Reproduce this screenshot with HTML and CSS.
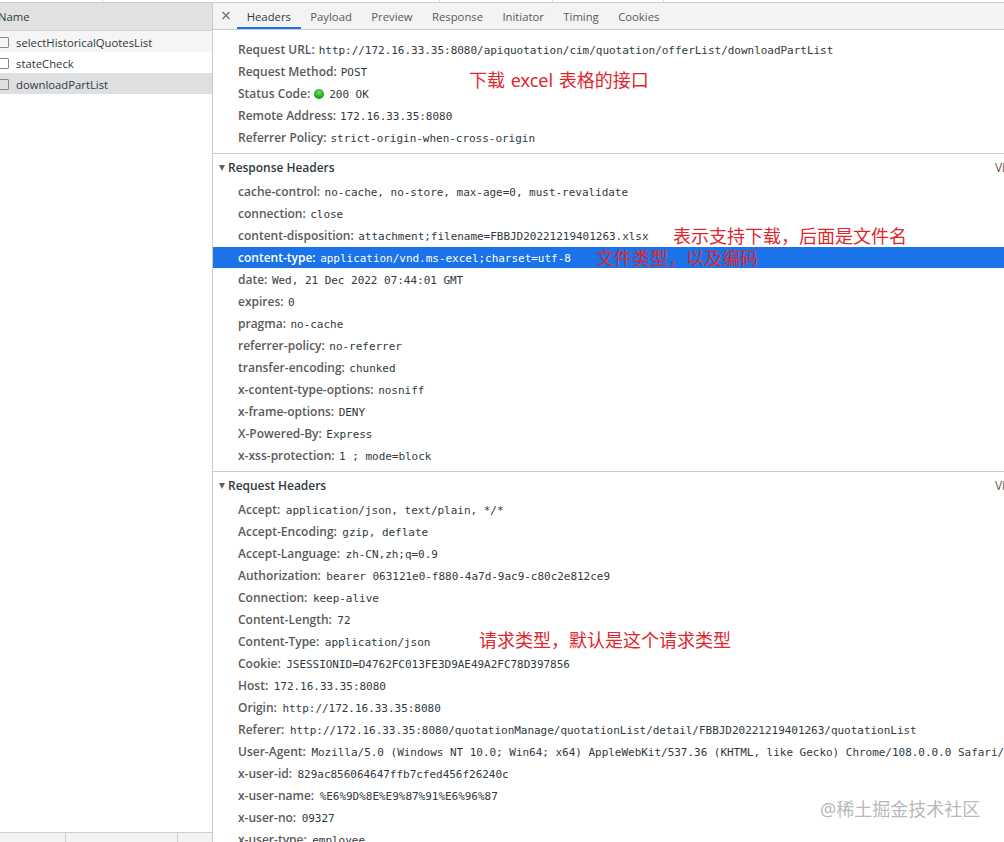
FILE: index.html
```html
<!DOCTYPE html>
<html lang="zh-CN">
<head>
<meta charset="utf-8">
<title>Network</title>
<link rel="stylesheet" href="styles.css">
</head>
<body>
<div class="topstrip"><i class="s1"></i><i class="s2"></i><i class="s3"></i><i class="s4"></i></div>
<div class="panes">
  <aside class="list">
    <div class="list-head">Name</div>
    <div class="req alt"><span class="cb"></span>selectHistoricalQuotesList</div>
    <div class="req"><span class="cb"></span>stateCheck</div>
    <div class="req sel"><span class="cb"></span>downloadPartList</div>
    <div class="list-fill"></div>
    <div class="list-foot"><i class="f1"></i><i class="f2"></i></div>
  </aside>
  <main class="detail">
    <nav class="tabs">
      <svg class="close" width="10" height="10" viewBox="0 0 10 10"><path d="M1.5 1l7 7M8.5 1l-7 7" stroke="#6e6e6e" stroke-width="1.2" fill="none"/></svg>
      <span class="tab active">Headers</span>
      <span class="tab">Payload</span>
      <span class="tab">Preview</span>
      <span class="tab">Response</span>
      <span class="tab">Initiator</span>
      <span class="tab">Timing</span>
      <span class="tab">Cookies</span>
    </nav>
    <section class="general">
      <div class="row"><b>Request URL:</b><code>http://172.16.33.35:8080/apiquotation/cim/quotation/offerList/downloadPartList</code></div>
      <div class="row"><b>Request Method:</b><code>POST</code></div>
      <div class="row"><b>Status Code:</b><span class="dot"></span><code>200 OK</code></div>
      <div class="row"><b>Remote Address:</b><code>172.16.33.35:8080</code></div>
      <div class="row"><b>Referrer Policy:</b><code>strict-origin-when-cross-origin</code></div>
    </section>
    <section class="block response">
      <h3 class="head"><span class="tri"></span>Response Headers<span class="view">View source</span></h3>
      <div class="row"><b>cache-control:</b><code>no-cache, no-store, max-age=0, must-revalidate</code></div>
      <div class="row"><b>connection:</b><code>close</code></div>
      <div class="row"><b>content-disposition:</b><code>attachment;filename=FBBJD20221219401263.xlsx</code></div>
      <div class="row picked"><b>content-type:</b><code>application/vnd.ms-excel;charset=utf-8</code></div>
      <div class="row"><b>date:</b><code>Wed, 21 Dec 2022 07:44:01 GMT</code></div>
      <div class="row"><b>expires:</b><code>0</code></div>
      <div class="row"><b>pragma:</b><code>no-cache</code></div>
      <div class="row"><b>referrer-policy:</b><code>no-referrer</code></div>
      <div class="row"><b>transfer-encoding:</b><code>chunked</code></div>
      <div class="row"><b>x-content-type-options:</b><code>nosniff</code></div>
      <div class="row"><b>x-frame-options:</b><code>DENY</code></div>
      <div class="row"><b>X-Powered-By:</b><code>Express</code></div>
      <div class="row"><b>x-xss-protection:</b><code>1 ; mode=block</code></div>
    </section>
    <section class="block request">
      <h3 class="head"><span class="tri"></span>Request Headers<span class="view">View source</span></h3>
      <div class="row"><b>Accept:</b><code>application/json, text/plain, */*</code></div>
      <div class="row"><b>Accept-Encoding:</b><code>gzip, deflate</code></div>
      <div class="row"><b>Accept-Language:</b><code>zh-CN,zh;q=0.9</code></div>
      <div class="row"><b>Authorization:</b><code>bearer 063121e0-f880-4a7d-9ac9-c80c2e812ce9</code></div>
      <div class="row"><b>Connection:</b><code>keep-alive</code></div>
      <div class="row"><b>Content-Length:</b><code>72</code></div>
      <div class="row"><b>Content-Type:</b><code>application/json</code></div>
      <div class="row"><b>Cookie:</b><code>JSESSIONID=D4762FC013FE3D9AE49A2FC78D397856</code></div>
      <div class="row"><b>Host:</b><code>172.16.33.35:8080</code></div>
      <div class="row"><b>Origin:</b><code>http://172.16.33.35:8080</code></div>
      <div class="row"><b>Referer:</b><code>http://172.16.33.35:8080/quotationManage/quotationList/detail/FBBJD20221219401263/quotationList</code></div>
      <div class="row"><b>User-Agent:</b><code>Mozilla/5.0 (Windows NT 10.0; Win64; x64) AppleWebKit/537.36 (KHTML, like Gecko) Chrome/108.0.0.0 Safari/537.36</code></div>
      <div class="row"><b>x-user-id:</b><code>829ac856064647ffb7cfed456f26240c</code></div>
      <div class="row"><b>x-user-name:</b><code>%E6%9D%8E%E9%87%91%E6%96%87</code></div>
      <div class="row"><b>x-user-no:</b><code>09327</code></div>
      <div class="row"><b>x-user-type:</b><code>employee</code></div>
    </section>
  </main>
</div>
<div class="note n1">下载 excel 表格的接口</div>
<div class="note n2">表示支持下载，后面是文件名</div>
<div class="note n3">文件类型，以及编码</div>
<div class="note n4">请求类型，默认是这个请求类型</div>
<div class="mark">@稀土掘金技术社区</div>
</body>
</html>
```
FILE: styles.css
```css
html, body { margin: 0; height: 842px; overflow: hidden; background: #fff; }
body { font-family: "Open Sans", "Noto Sans", sans-serif; font-size: 12px; color: #303942; position: relative; }
.topstrip { height: 2px; background: #fff; position: relative; border-bottom: 1px solid #cdcdcd; }
.topstrip i { position: absolute; top: 0; width: 1px; height: 2px; background: #d8d8d8; }
.s1 { left: 102px; } .s2 { left: 439px; } .s3 { left: 552px; } .s4 { left: 663px; }
.panes { display: flex; height: 839px; }
.list { width: 212px; flex: none; display: flex; flex-direction: column; border-right: 1px solid #cbcbcb; font-size: 11.3px; }
.list-head { height: 28px; padding-top: 1px; box-sizing: border-box; line-height: 26px; background: #e1e1e1; margin-left: -8px; padding-left: 6px; color: #303942; border-bottom: 1px solid #d4d4d4; }
.req { height: 21px; padding-top: 1px; box-sizing: border-box; display: flex; align-items: center; color: #303942; }
.req.alt { background: #f5f5f5; }
.req.sel { background: #dedfe1; }
.cb { width: 9px; height: 9px; border: 1px solid #8a8a8a; border-radius: 1px; background: #fff; margin-left: -2px; margin-right: 7px; flex: none; }
.req.sel .cb, .req.alt .cb { background: transparent; }
.list-fill { flex: 1; }
.list-foot { height: 9px; background: #f3f3f3; border-top: 1px solid #cfcfcf; position: relative; }
.list-foot i { position: absolute; top: 0; width: 1px; height: 9px; background: #cfcfcf; }
.f1 { left: 65px; } .f2 { left: 177px; }
.detail { flex: 1; min-width: 0; overflow: hidden; }
.tabs { height: 26px; background: #f3f3f3; border-bottom: 1px solid #cdcdcd; display: flex; align-items: center; padding-left: 8px; font-size: 11.3px; }
.close { margin-right: 6px; }
.tab { height: 26px; line-height: 27px; padding: 0 9.7px; color: #5a5a5a; white-space: nowrap; box-sizing: border-box; }
.tab.active { color: #303942; border-bottom: 2px solid #1a73e8; }
.general { padding: 9px 0 4px; }
.block { border-top: 1px solid #cdcdcd; padding-bottom: 4px; }
.row { height: 22px; line-height: 22px; padding-left: 25px; white-space: nowrap; overflow: hidden; color: #303942; }
.row b { font-weight: 600; color: #5a5a5a; margin-right: 4px; }
.response .row b { margin-right: 4.5px; }
.request .row b { margin-right: 5.5px; }
code { font-family: "DejaVu Sans Mono", monospace; font-size: 11px; letter-spacing: -0.025px; color: #303942; }
.dot { display: inline-block; width: 10px; height: 10px; border-radius: 50%; background: radial-gradient(circle at 50% 35%, #6fe06f, #0fa00f 70%); margin-right: 5px; vertical-align: -1px; }
.picked { background: #1a73e8; color: #fff; height: 21px; line-height: 21px; margin-bottom: 1px; }
.response .row.picked b, .picked code { color: #fff; }
.head { margin: 0; height: 27px; line-height: 27px; font-size: 12px; font-weight: 600; letter-spacing: -0.03px; color: #303942; display: flex; align-items: center; padding-left: 6px; position: relative; white-space: nowrap; }
.tri { width: 0; height: 0; border-left: 3.5px solid transparent; border-right: 3.5px solid transparent; border-top: 6px solid #5f6368; margin-right: 3px; }
.view { position: absolute; left: 782px; font-weight: 400; color: #5a5a5a; }
.note { position: absolute; font-family: "Noto Sans", "Noto Sans CJK SC", sans-serif; font-size: 18px; line-height: 24px; color: #e0262c; white-space: nowrap; }
.n1 { left: 469px; top: 68px; word-spacing: 1px; }
.n2 { left: 673px; top: 224px; }
.n3 { left: 596px; top: 246px; }
.n4 { left: 479px; top: 628px; }
.mark { position: absolute; left: 820px; top: 797px; font-family: "Noto Sans", "Noto Sans CJK SC", sans-serif; font-size: 18px; line-height: 24px; color: #b9b9b9; white-space: nowrap; }
```
